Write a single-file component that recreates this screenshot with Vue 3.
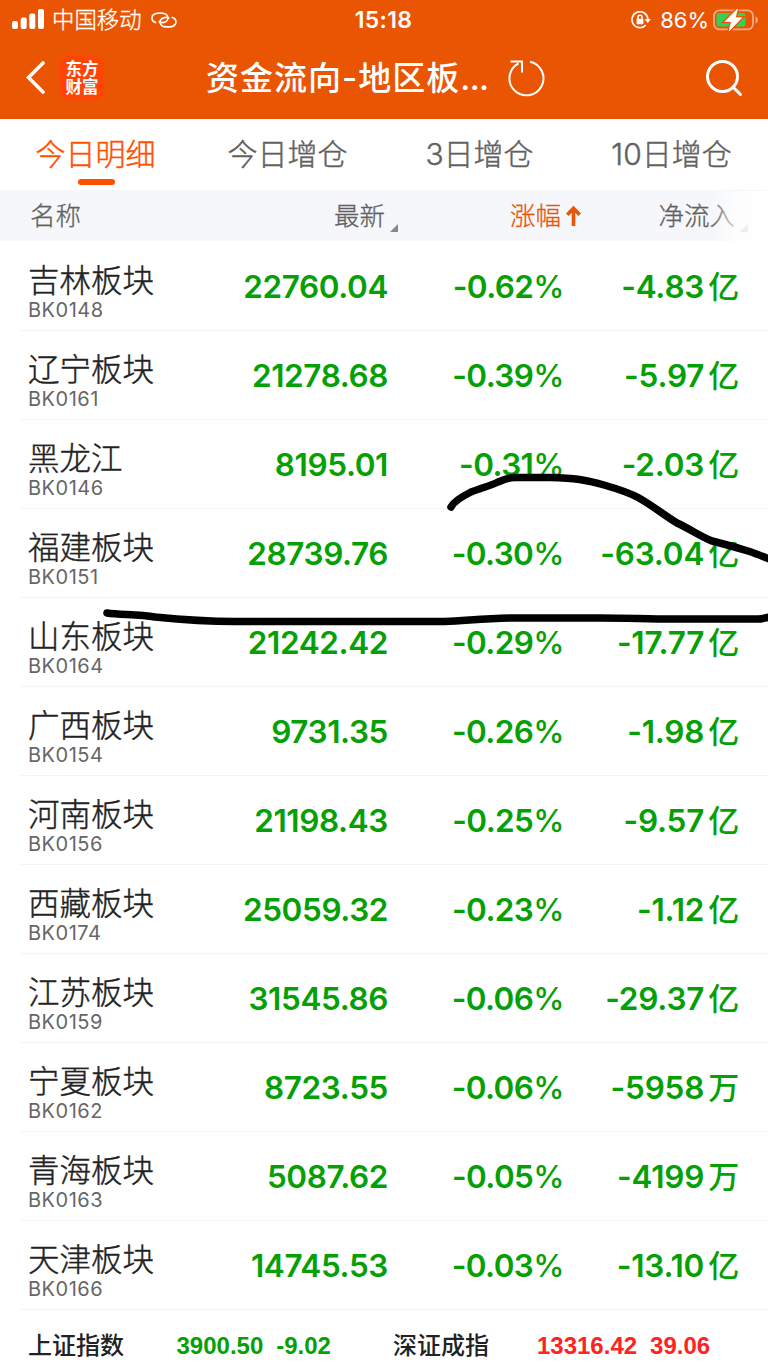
<template>
  <div class="page">
    <header class="header">
      <div class="status-bar">
        <div class="status-left">
          <svg class="signal" width="32" height="20" viewBox="0 0 32 20">
            <rect x="0" y="12" width="6" height="8" rx="2" />
            <rect x="8.7" y="8.5" width="6" height="11.5" rx="2" />
            <rect x="17.3" y="4.5" width="6" height="15.5" rx="2" />
            <rect x="26" y="0" width="6" height="20" rx="2" />
          </svg>
          <span class="carrier">中国移动</span>
          <svg class="link" width="26" height="16" viewBox="0 0 26 16">
            <path d="M5.2 10.6C2.6 9.9 .9 8 .9 5.9 .9 3.2 3.7 1.1 7.4 1.1h3.2c3.7 0 6.3 2.1 6.3 4.8s-2.6 4.7-6.3 4.7c-1.5 0-2.5-.5-2.5-1.3" />
            <path d="M20.6 5.3c2.7 .7 4.4 2.6 4.4 4.8 0 2.7-2.8 4.8-6.5 4.8h-3.2c-3.7 0-6.3-2.1-6.3-4.8s2.6-4.7 6.3-4.7c1.5 0 2.5 .5 2.5 1.3" />
          </svg>
        </div>
        <span class="time">15:18</span>
        <div class="status-right">
          <svg class="lock" width="20" height="18" viewBox="0 0 20 18">
            <path class="ring" d="M14.9 14A8 8 0 1 1 16.9 8" />
            <path d="M13.6 8h6.2l-3.1 4.3z" />
            <rect x="5.6" y="7.7" width="6.8" height="5.5" rx=".8" />
            <path class="shackle" d="M7 8V6.3a2 2 0 0 1 4 0V8" />
          </svg>
          <span class="percent">86%</span>
          <svg class="battery" width="45" height="23" viewBox="0 0 45 23">
            <rect class="case" x="1" y="1.4" width="39" height="19" rx="5.5" />
            <path class="cap" d="M42.5 7.5v7c1.5-.6 2.4-1.9 2.4-3.5S44 8.1 42.5 7.500z" />
            <rect class="level" x="3.5" y="4" width="29" height="13.5" rx="2.5" />
            <path class="bolt-edge" d="M24.5 0 12 12.500h6.500L16.200 21.800 28.800 8.800h-6.600z" />
            <path class="bolt" d="M24.5 0 12 12.500h6.500L16.200 21.800 28.800 8.800h-6.600z" />
          </svg>
        </div>
      </div>

      <div class="nav-bar">
        <div class="nav-left">
          <svg class="back" width="20" height="34" viewBox="0 0 20 34">
            <path d="M17 2 2.5 16.5 17 31" />
          </svg>
          <div class="logo"><span>东方</span><span>财富</span></div>
        </div>
        <div class="title">
          <h1>资金流向-地区板<span class="dots">...</span></h1>
          <svg class="refresh" width="38" height="38" viewBox="0 0 38 38">
            <path d="M23 2.7A17 17 0 1 1 11.5 4.3M3.5 2.5h11.5v11" />
          </svg>
        </div>
        <svg class="search" width="38" height="38" viewBox="0 0 38 38">
          <circle cx="17.5" cy="17.5" r="15" />
          <path d="M28 28 35.5 35.5" />
        </svg>
      </div>
    </header>

    <nav class="tabs">
      <div
        v-for="(tab, index) in tabs"
        :key="tab"
        class="tab"
        :class="{ active: index === activeTab }"
        @click="activeTab = index"
      >
        <span>{{ tab }}</span>
      </div>
    </nav>

    <div class="table-head">
      <span class="head-name">名称</span>
      <span class="head-price">最新<i class="corner"></i></span>
      <span class="head-change">
        涨幅
        <svg width="15" height="21" viewBox="0 0 15 21">
          <path d="M7.5 20V2.5M1.3 8.8l6.2-6.5 6.2 6.5" />
        </svg>
      </span>
      <span class="head-flow">净流入<i class="corner"></i></span>
      <div class="fade"></div>
    </div>

    <main class="list">
      <div v-for="row in rows" :key="row.code" class="row">
        <div class="name-cell">
          <div class="name">{{ row.name }}</div>
          <div class="code">{{ row.code }}</div>
        </div>
        <div class="num">{{ row.price }}</div>
        <div class="num change">{{ row.change }}<span class="sign">%</span></div>
        <div class="num flow">{{ row.flow }}<span class="unit">{{ row.unit }}</span></div>
      </div>

      <!-- freehand marker strokes over the rows -->
      <svg class="marks" width="768" height="180" viewBox="0 0 768 180">
        <path d="M451 37C454 31 463 26 471 22C481 18 490 16 498 12C505 9 508 7.500 515 7.500H550C575 8 586 10 604 15C618 19 630 23 639 28C653 36 664 45 677 53C690 59 700 66 712 71C724 74 738 78 748 81C757 84 764 87 772 90" />
        <path d="M107 143C120 145 138 144 155 147C175 149 200 151.500 235 151.500H445C465 151 480 148.500 510 148H600C630 148 645 149 675 149H758C765 149 766 147 772 147" />
      </svg>
    </main>

    <footer class="footer">
      <span class="index-name">上证指数</span>
      <span class="index-value down sh">3900.50</span>
      <span class="index-value down">-9.02</span>
      <span class="index-name second">深证成指</span>
      <span class="index-value up sz">13316.42</span>
      <span class="index-value up">39.06</span>
    </footer>
  </div>
</template>

<script setup>
import { ref } from 'vue'

const tabs = ['今日明细', '今日增仓', '3日增仓', '10日增仓']
const activeTab = ref(0)

const rows = ref([
  { name: '吉林板块', code: 'BK0148', price: '22760.04', change: '-0.62', flow: '-4.83', unit: '亿' },
  { name: '辽宁板块', code: 'BK0161', price: '21278.68', change: '-0.39', flow: '-5.97', unit: '亿' },
  { name: '黑龙江', code: 'BK0146', price: '8195.01', change: '-0.31', flow: '-2.03', unit: '亿' },
  { name: '福建板块', code: 'BK0151', price: '28739.76', change: '-0.30', flow: '-63.04', unit: '亿' },
  { name: '山东板块', code: 'BK0164', price: '21242.42', change: '-0.29', flow: '-17.77', unit: '亿' },
  { name: '广西板块', code: 'BK0154', price: '9731.35', change: '-0.26', flow: '-1.98', unit: '亿' },
  { name: '河南板块', code: 'BK0156', price: '21198.43', change: '-0.25', flow: '-9.57', unit: '亿' },
  { name: '西藏板块', code: 'BK0174', price: '25059.32', change: '-0.23', flow: '-1.12', unit: '亿' },
  { name: '江苏板块', code: 'BK0159', price: '31545.86', change: '-0.06', flow: '-29.37', unit: '亿' },
  { name: '宁夏板块', code: 'BK0162', price: '8723.55', change: '-0.06', flow: '-5958', unit: '万' },
  { name: '青海板块', code: 'BK0163', price: '5087.62', change: '-0.05', flow: '-4199', unit: '万' },
  { name: '天津板块', code: 'BK0166', price: '14745.53', change: '-0.03', flow: '-13.10', unit: '亿' },
])
</script>

<style>
body {
  margin: 0;
  background: #fff;
}
</style>

<style scoped>
.page {
  width: 768px;
  height: 1366px;
  overflow: hidden;
  background: #fff;
  font-family: Inter, "Noto Sans CJK SC", sans-serif;
}

.header {
  height: 119px;
  background: #ea5504;
  color: #fff;
}

svg {
  display: block;
  flex: none;
}

.status-bar {
  display: grid;
  grid-template-columns: 1fr auto 1fr;
  align-items: center;
  height: 40px;
  padding: 0 13px 0 12px;
}

.status-left,
.status-right {
  display: flex;
  align-items: center;
}

.status-right {
  justify-content: flex-end;
}

.signal {
  fill: #fff;
  margin-top: -2px;
}

.carrier {
  margin-left: 8px;
  font-size: 22.4px;
  font-weight: 300;
  line-height: 40px;
  -webkit-text-stroke: 0.3px currentColor;
}

.link {
  margin-left: 9px;
  fill: none;
  stroke: #fff;
  stroke-width: 1.7;
}

.time {
  font-size: 23px;
  font-weight: 600;
  letter-spacing: 0.3px;
}

.lock {
  fill: #fff;
}

.lock .ring,
.lock .shackle {
  fill: none;
  stroke: #fff;
  stroke-width: 1.6;
}

.percent {
  margin: 0 4px 0 9px;
  font-size: 22px;
}

.battery {
  margin-right: -3px;
  overflow: visible;
}

.battery .case {
  fill: none;
  stroke: #f5aa82;
  stroke-width: 1.8;
}

.battery .cap {
  fill: #f5aa82;
}

.battery .level {
  fill: #32d158;
}

.battery .bolt-edge {
  fill: none;
  stroke: #ea5504;
  stroke-width: 3.4;
}

.battery .bolt {
  fill: #fff;
  stroke: #fff;
  stroke-width: 0.8;
  stroke-linejoin: round;
}

.nav-bar {
  display: grid;
  grid-template-columns: 180px 1fr auto;
  align-items: center;
  height: 76px;
  padding: 0 25px 0 26px;
}

.nav-left {
  display: flex;
  align-items: center;
}

.back {
  fill: none;
  stroke: #fff;
  stroke-width: 3.6;
  stroke-linecap: round;
}

.logo {
  display: flex;
  flex-direction: column;
  align-items: center;
  justify-content: center;
  width: 44px;
  height: 44px;
  margin-left: 14px;
  border-radius: 10px;
  background: #ff4408;
  font-size: 16.5px;
  font-weight: 700;
  line-height: 18px;
}

.title {
  display: flex;
  align-items: center;
}

h1 {
  margin: 0;
  font-size: 33px;
  font-weight: 500;
  line-height: 50px;
  letter-spacing: 1px;
  white-space: nowrap;
}

.dots {
  letter-spacing: -0.6px;
}

.refresh {
  margin-left: 18px;
  fill: none;
  stroke: #fff;
  stroke-width: 2;
}

.search {
  fill: none;
  stroke: #fff;
  stroke-width: 3;
  stroke-linecap: round;
}

.tabs {
  display: grid;
  grid-template-columns: repeat(4, 1fr);
  height: 71px;
}

.tab {
  display: flex;
  flex-direction: column;
  align-items: center;
  font-size: 30px;
  font-weight: 300;
  line-height: 71px;
  color: #606060;
  -webkit-text-stroke: 0.4px currentColor;
}

.tab span {
  margin-left: -1px;
}

.tab.active {
  color: #ff5000;
}

.tab.active::after {
  content: "";
  width: 37px;
  height: 6px;
  margin-top: -11px;
  border-radius: 3px;
  background: #ff5000;
}

.table-head {
  position: relative;
  display: grid;
  grid-template-columns: 200px 199px 182px 168px;
  height: 51px;
  background: #f6f7fa;
  font-size: 25.5px;
  font-weight: 300;
  line-height: 52px;
  color: #606060;
  -webkit-text-stroke: 0.3px currentColor;
}

.head-name {
  padding-left: 30px;
}

.head-price,
.head-change,
.head-flow {
  display: flex;
  justify-content: flex-end;
}

.head-change {
  align-items: center;
  gap: 5px;
  color: #ea5504;
}

.head-change svg {
  fill: none;
  stroke: #ea5504;
  stroke-width: 3.6;
}

.corner {
  align-self: flex-end;
  margin: 0 1px 10px 5px;
  border-bottom: 8px solid #888;
  border-left: 8px solid transparent;
}

.fade {
  position: absolute;
  top: 1px;
  right: 0;
  width: 57px;
  height: 50px;
  background: linear-gradient(to right, rgba(255, 255, 255, 0), rgba(255, 255, 255, 0.7) 40%, rgba(255, 255, 255, 0.85) 60%, #fff);
}

.list {
  position: relative;
  margin-top: 1px;
}

.row {
  display: grid;
  grid-template-columns: 160px 200px 176px 175px;
  box-sizing: border-box;
  height: 89px;
  margin-left: 20px;
  padding-left: 8px;
  border-bottom: 1px solid #f4f4f4;
}

.name {
  padding-top: 19px;
  font-size: 31.5px;
  font-weight: 300;
  line-height: 39px;
  color: #222;
  -webkit-text-stroke: 0.4px currentColor;
}

.code {
  font-size: 20px;
  line-height: 20px;
  letter-spacing: 0.5px;
  color: #666;
}

.num {
  font-size: 31.5px;
  font-weight: 580;
  line-height: 89px;
  letter-spacing: -0.4px;
  text-align: right;
  white-space: nowrap;
  color: #05a005;
}

.change {
  letter-spacing: -0.6px;
}

.sign {
  font-weight: 500;
}

.flow {
  letter-spacing: -0.2px;
}

.unit {
  margin-left: 4px;
  font-size: 31px;
  font-weight: 500;
}

.marks {
  position: absolute;
  top: 228px;
  left: 0;
  fill: none;
  stroke: #000;
  stroke-width: 7.5;
  stroke-linecap: round;
}

.footer {
  display: flex;
  height: 56px;
  padding-left: 28px;
  font-family: "Liberation Sans", "Noto Sans CJK SC", sans-serif;
  font-size: 24px;
  font-weight: 500;
  line-height: 72px;
  white-space: nowrap;
  color: #222;
}

.index-name {
  width: 96px;
}

.index-name.second {
  margin-left: 62px;
}

.index-value {
  margin-left: 13px;
  font-weight: 700;
}

.index-value.sh {
  margin-left: 52.5px;
}

.index-value.sz {
  margin-left: 48px;
}

.down {
  color: #05a005;
}

.up {
  color: #ff2222;
}
</style>
